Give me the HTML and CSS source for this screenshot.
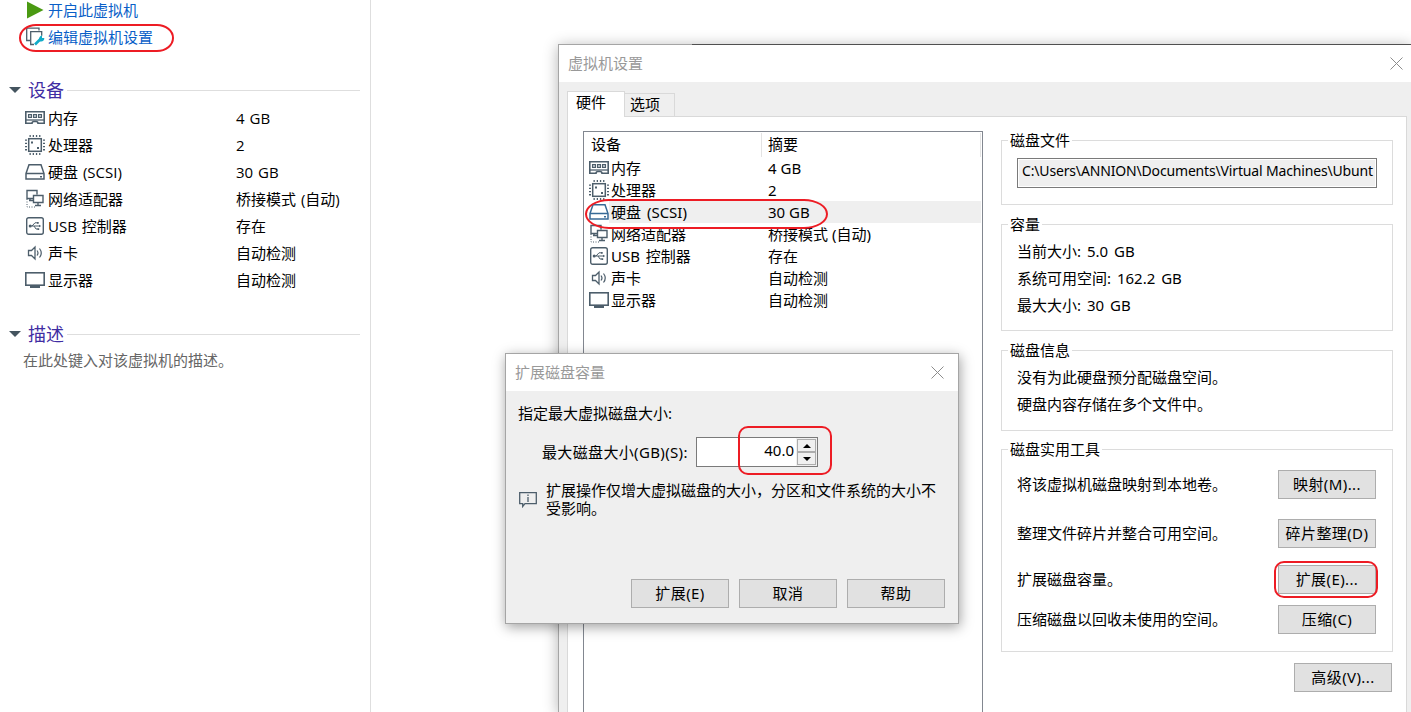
FILE: index.html
```html
<!DOCTYPE html>
<html lang="zh-CN">
<head>
    <meta charset="UTF-8">
    <meta name="viewport" content="width=device-width, initial-scale=1.0">
    <title>虚拟机设置</title>
    <link rel="stylesheet" href="styles.css">
</head>
<body>
    <!-- Icon sprite -->
    <svg class="sprite">
        <symbol id="i-memory" viewBox="0 0 20 20">
            <path d="M.8 3.800h18.400v11.400h-6.200q0-1.700-2-1.700h-2q-2 0-2 1.700H.8z" fill="none" stroke="currentColor" stroke-width="1.600"/>
            <path d="M3.600 6.600h2.800v2.800H3.600zM8.600 6.600h2.800v2.800H8.600zM13.600 6.600h2.800v2.800h-2.800z" fill="none" stroke="currentColor" stroke-width="1.300"/>
            <path d="M1 12h18" stroke="currentColor" stroke-width="1.300"/>
        </symbol>
        <symbol id="i-cpu" viewBox="0 0 20 20">
            <rect x="3.700" y="3.700" width="12.600" height="12.600" fill="none" stroke="currentColor" stroke-width="1.500"/>
            <path d="M4.500 1h11M4.500 19h11M1 4.500v11M19 4.500v11" fill="none" stroke="currentColor" stroke-width="2" stroke-dasharray="1.300 1.900"/>
            <path d="M6 6.500h2v2H6zM12 12h2v2h-2z" fill="currentColor"/>
        </symbol>
        <symbol id="i-disk" viewBox="0 0 20 20">
            <path d="M1 11.500L4 2.700h12l3 8.800v5.500H1zM1 11.500h18" fill="none" stroke="currentColor" stroke-width="1.500"/>
            <path d="M15 14h2v1.500h-2z" fill="currentColor"/>
        </symbol>
        <symbol id="i-net" viewBox="0 0 20 20">
            <path d="M8 9.500H2v-8h10v4M8.500 6.500h9.500v7H8.500zM13 13.500v2.500M10 16.500h6M5 9.500v2M4 11.500h4" fill="none" stroke="currentColor" stroke-width="1.400"/>
            <path d="M2 10v8h9" fill="none" stroke="currentColor" stroke-width="1" stroke-dasharray="1 1.500"/>
        </symbol>
        <symbol id="i-usb" viewBox="0 0 20 20">
            <rect x="1.700" y="1.700" width="16.600" height="16.600" rx="2" fill="none" stroke="currentColor" stroke-width="1.400"/>
            <path d="M5 10h9.500M7 10l3-3.200h2.500M9 10l2 3h2" fill="none" stroke="currentColor" stroke-width="1"/>
            <circle cx="5.200" cy="10" r="1.500" fill="currentColor"/>
            <path d="M12 6h1.700v1.700H12zM12.500 12.200h1.700v1.700h-1.700zM14 8.700l2.200 1.300-2.200 1.300z" fill="currentColor"/>
        </symbol>
        <symbol id="i-sound" viewBox="0 0 20 20">
            <path d="M3.500 7.500h3L10 4v12l-3.500-3.500h-3z" fill="none" stroke="currentColor" stroke-width="1.300"/>
            <path d="M12 7.500q2 2.500 0 5M14.500 5.500q3.500 4.500 0 9" fill="none" stroke="currentColor" stroke-width="1.200"/>
        </symbol>
        <symbol id="i-display" viewBox="0 0 20 20">
            <rect x=".8" y="2.800" width="18.400" height="12.400" fill="none" stroke="currentColor" stroke-width="1.600"/>
            <path d="M5 17h10" stroke="currentColor" stroke-width="2"/>
        </symbol>
        <symbol id="i-close" viewBox="0 0 13 13">
            <path d="M.5 .5l12 12M12.500 .5l-12 12" fill="none" stroke="currentColor" stroke-width="1"/>
        </symbol>
    </svg>

    <!-- VM summary -->
    <aside class="summary">
        <a class="action">
            <svg class="action-icon" viewBox="0 0 20 20"><path d="M2 1.500L18.500 10 2 18.500z" fill="#4a9a12"/></svg>
            <span>开启此虚拟机</span>
        </a>
        <a class="action">
            <svg class="action-icon" viewBox="0 0 20 20">
                <path d="M5 13.500H1.700V1.200H14v2.300" fill="none" stroke="#4d5e6b" stroke-width="1.300"/>
                <path d="M9 17.500H5.700V4.700h11v4" fill="none" stroke="#4d5e6b" stroke-width="1.300"/>
                <path d="M10 17.500l5-5" stroke="#12abc8" stroke-width="2.600"/>
                <path d="M17 8.500v2.500h2.300c.2 2.800-2 4.200-4.800 3.300-1.200-2.500-.2-5.300 2.500-5.800z" fill="#12abc8"/>
            </svg>
            <span>编辑虚拟机设置</span>
            <i class="mark mark-edit"></i>
        </a>

        <h2 class="group-title devices-title">设备</h2>
        <ul class="devices">
            <li><svg><use href="#i-memory"/></svg><span>内存</span><b>4 GB</b></li>
            <li><svg><use href="#i-cpu"/></svg><span>处理器</span><b>2</b></li>
            <li><svg><use href="#i-disk"/></svg><span>硬盘 (SCSI)</span><b>30 GB</b></li>
            <li><svg><use href="#i-net"/></svg><span>网络适配器</span><b>桥接模式 (自动)</b></li>
            <li><svg><use href="#i-usb"/></svg><span>USB 控制器</span><b>存在</b></li>
            <li><svg><use href="#i-sound"/></svg><span>声卡</span><b>自动检测</b></li>
            <li><svg><use href="#i-display"/></svg><span>显示器</span><b>自动检测</b></li>
        </ul>

        <h2 class="group-title">描述</h2>
        <p class="description">在此处键入对该虚拟机的描述。</p>
    </aside>

    <!-- Settings window -->
    <section class="window settings">
        <header class="titlebar">
            <span>虚拟机设置</span>
            <svg class="close"><use href="#i-close"/></svg>
        </header>
        <div class="settings-body">
            <nav class="tabs">
                <span class="tab active">硬件</span>
                <span class="tab">选项</span>
            </nav>
            <div class="panel">
                <div class="hardware">
                    <div class="hardware-head"><span>设备</span><b>摘要</b></div>
                    <ul class="hardware-list">
                        <li><svg><use href="#i-memory"/></svg><span>内存</span><b>4 GB</b></li>
                        <li><svg><use href="#i-cpu"/></svg><span>处理器</span><b>2</b></li>
                        <li class="selected"><svg><use href="#i-disk"/></svg><span>硬盘 (SCSI)</span><b>30 GB</b><i class="mark mark-row"></i></li>
                        <li><svg><use href="#i-net"/></svg><span>网络适配器</span><b>桥接模式 (自动)</b></li>
                        <li><svg><use href="#i-usb"/></svg><span>USB 控制器</span><b>存在</b></li>
                        <li><svg><use href="#i-sound"/></svg><span>声卡</span><b>自动检测</b></li>
                        <li><svg><use href="#i-display"/></svg><span>显示器</span><b>自动检测</b></li>
                    </ul>
                </div>

                <div class="details">
                    <fieldset class="file">
                        <legend>磁盘文件</legend>
                        <div class="path">C:\Users\ANNION\Documents\Virtual Machines\Ubunt</div>
                    </fieldset>
                    <fieldset class="capacity">
                        <legend>容量</legend>
                        <p>当前大小: 5.0 GB</p>
                        <p>系统可用空间: 162.2 GB</p>
                        <p>最大大小: 30 GB</p>
                    </fieldset>
                    <fieldset class="info">
                        <legend>磁盘信息</legend>
                        <p>没有为此硬盘预分配磁盘空间。</p>
                        <p>硬盘内容存储在多个文件中。</p>
                    </fieldset>
                    <fieldset class="tools">
                        <legend>磁盘实用工具</legend>
                        <div class="tool-grid">
                            <span>将该虚拟机磁盘映射到本地卷。</span><button>映射(M)...</button>
                            <span>整理文件碎片并整合可用空间。</span><button>碎片整理(D)</button>
                            <span>扩展磁盘容量。</span><button>扩展(E)...<i class="mark mark-expand"></i></button>
                            <span>压缩磁盘以回收未使用的空间。</span><button>压缩(C)</button>
                        </div>
                    </fieldset>
                    <button class="advanced">高级(V)...</button>
                </div>
            </div>
        </div>
    </section>

    <!-- Expand disk window -->
    <section class="window expand">
        <header class="titlebar">
            <span>扩展磁盘容量</span>
            <svg class="close"><use href="#i-close"/></svg>
        </header>
        <div class="expand-body">
            <p class="prompt">指定最大虚拟磁盘大小:</p>
            <div class="size-row">
                <label>最大磁盘大小(GB)(S):</label>
                <div class="spinner">
                    <span class="value">40.0</span>
                    <div class="arrows">
                        <span><svg viewBox="0 0 8 4"><path d="M0 4l4-4 4 4z"/></svg></span>
                        <span><svg viewBox="0 0 8 4"><path d="M0 0l4 4 4-4z"/></svg></span>
                    </div>
                    <i class="mark mark-size"></i>
                </div>
            </div>
            <div class="note">
                <svg viewBox="0 0 18 17">
                    <path d="M.7 1.700h16.600v11H6L3.700 15.500v-2.800h-3z" fill="none" stroke="#4d5e6b" stroke-width="1.300"/>
                    <path d="M9 3.500v1.500M9 6v5" stroke="#4d5e6b" stroke-width="1.300"/>
                </svg>
                <p>扩展操作仅增大虚拟磁盘的大小，分区和文件系统的大小不受影响。</p>
            </div>
            <div class="buttons">
                <button>扩展(E)</button>
                <button>取消</button>
                <button>帮助</button>
            </div>
        </div>
    </section>
</body>
</html>
```
FILE: styles.css
```css
* {
    box-sizing: border-box;
}
body {
    margin: 0;
    height: 712px;
    position: relative;
    overflow: hidden;
    background: #fff;
    color: #000;
    font-family: 'Noto Sans', 'Noto Sans CJK SC', sans-serif;
    font-size: 15px;
    line-height: 20px;
    white-space: nowrap;
}
p, h2, ul {
    margin: 0;
    padding: 0;
}
ul {
    list-style: none;
}
b {
    font-weight: normal;
}
.sprite {
    display: none;
}

/* hand-drawn red highlights */
.mark {
    position: absolute;
    border: 2px solid #ed1c24;
    pointer-events: none;
}
.mark-edit {
    left: 19px;
    top: -3px;
    width: 155px;
    height: 28px;
    border-radius: 17px / 14px;
}
.mark-row {
    left: 1px;
    top: -2px;
    width: 243px;
    height: 30px;
    border-radius: 24px / 15px;
    z-index: 1;
}
.mark-expand {
    left: -5px;
    top: -5px;
    width: 104px;
    height: 37px;
    border-radius: 10px;
}
.mark-size {
    left: 41px;
    top: -12px;
    width: 94px;
    height: 49px;
    border-radius: 10px;
}

/* summary */
.summary {
    width: 371px;
    height: 100%;
    border-right: 1px solid #dedede;
    font-family: 'Open Sans', 'Noto Sans CJK SC', sans-serif;
}
.action {
    display: flex;
    position: relative;
    height: 20px;
    margin-bottom: 7px;
    padding-left: 25px;
    color: #0a5fc8;
}
.action-icon {
    width: 20px;
    height: 20px;
    margin-right: 3px;
}
.group-title {
    display: flex;
    align-items: center;
    height: 24px;
    padding: 0 10px 0 9px;
    color: #3f2da3;
    font-size: 18px;
    font-weight: normal;
    line-height: 24px;
}
.group-title::before {
    content: "";
    border: 6px solid transparent;
    border-top-color: #44545f;
    border-bottom: 0;
    margin-right: 7px;
}
.group-title::after {
    content: "";
    flex: 1;
    height: 1px;
    margin-left: 3px;
    background: #dedede;
}
.devices-title {
    margin-top: 31px;
}
.devices {
    margin: 2px 0 29px;
    word-spacing: 1px;
}
.devices li {
    display: grid;
    grid-template-columns: 23px 188px 1fr;
    align-items: center;
    height: 27px;
    padding-left: 25px;
}
.devices svg, .hardware-list svg {
    width: 20px;
    height: 20px;
    color: #4d5e6b;
}
.description {
    padding: 4px 0 0 23px;
    color: #666;
}

/* windows */
.window {
    position: absolute;
    background: #efefef;
    border: 1px solid #a5a5a5;
}
.titlebar {
    display: flex;
    justify-content: space-between;
    align-items: center;
    height: 37px;
    background: #fff;
    color: #999;
    font-family: 'Open Sans', 'Noto Sans CJK SC', sans-serif;
}
.titlebar span {
    padding-bottom: 2px;
}
.close {
    width: 13px;
    height: 13px;
    color: #8c8c8c;
}
button {
    position: relative;
    width: 98px;
    height: 29px;
    padding: 0;
    background: #e1e1e1;
    border: 1px solid #adadad;
    color: #000;
    font: inherit;
    letter-spacing: 0.4px;
    line-height: 27px;
}

/* settings window */
.settings {
    left: 558px;
    top: 44px;
    width: 853px;
    height: 668px;
    border-width: 1px 0 0 1px;
    box-shadow: 0 2px 14px rgba(0, 0, 0, 0.3);
}
.settings::before {
    content: "";
    position: absolute;
    left: 133px;
    top: -1px;
    right: 0;
    height: 1px;
    background: #505050;
}
.settings .titlebar {
    padding: 0 8px 0 9px;
}
.settings-body {
    padding: 9px 0 0 8px;
}
.tabs {
    display: flex;
    align-items: flex-end;
    height: 25px;
}
.tab {
    width: 50px;
    height: 23px;
    padding-left: 5px;
    border: 1px solid #d9d9d9;
    border-width: 1px 1px 0 0;
    line-height: 21px;
}
.tab.active {
    width: 58px;
    height: 26px;
    margin-bottom: -1px;
    padding-left: 8px;
    border-width: 1px 1px 0 1px;
    background: #fff;
    z-index: 1;
}
.panel {
    display: flex;
    gap: 18px;
    width: 840px;
    height: 596px;
    padding: 14px 0 0 15px;
    background: #fff;
    border: 1px solid #d9d9d9;
    border-bottom: 0;
}
.hardware {
    width: 400px;
    border: 1px solid #828790;
    border-bottom: 0;
}
.hardware-head {
    display: grid;
    grid-template-columns: 178px 1fr;
    height: 24px;
    margin: 1px 1px 0 0;
    border-right: 1px solid #e3e3e3;
    line-height: 23px;
}
.hardware-head span {
    padding-left: 7px;
    border-right: 1px solid #e3e3e3;
}
.hardware-head b {
    padding-left: 6px;
}
.hardware-list li {
    display: grid;
    grid-template-columns: 22px 157px 1fr;
    align-items: center;
    position: relative;
    height: 22px;
    margin-right: 1px;
    padding-left: 5px;
}
.hardware-list span {
    word-spacing: 2px;
}
.hardware-list .selected {
    background: linear-gradient(#efefef, #efefef) 25px 0 no-repeat;
}
.hardware-list .selected svg {
    color: #376a96;
}
.details {
    width: 392px;
    margin-top: -1px;
}
fieldset {
    height: 75px;
    margin: 0 0 9px;
    padding: 0 15px;
    border: 1px solid #dcdcdc;
}
legend {
    height: 20px;
    margin-left: -9px;
    padding: 0 2px;
}
.path {
    width: 360px;
    height: 30px;
    margin-top: 8px;
    padding: 0 2px 0 4px;
    background: #efefef;
    border: 1px solid #7a7a7a;
    box-shadow: inset 0 0 0 1px #fff;
    font-size: 14px;
    letter-spacing: -0.16px;
    line-height: 24px;
}
.capacity {
    height: 117px;
    word-spacing: 2px;
}
.info {
    height: 91px;
    margin-bottom: 8px;
}
.capacity p, .info p {
    line-height: 27px;
}
.capacity p:nth-of-type(1), .info p:nth-of-type(1) {
    margin-top: 4px;
}
.tools {
    height: 213px;
    margin-bottom: 11px;
}
.tool-grid {
    display: grid;
    grid-template-columns: 1fr 98px;
    grid-template-rows: 49px 46px 40px 29px;
    width: 359px;
    margin-top: 11px;
    line-height: 29px;
}
.advanced {
    display: block;
    margin-left: 293px;
}

/* expand window */
.expand {
    left: 505px;
    top: 353px;
    width: 454px;
    height: 271px;
    box-shadow: 1px 3px 12px rgba(0, 0, 0, 0.38);
}
.expand .titlebar {
    padding: 0 14px 0 9px;
}
.expand-body {
    padding: 12px 13px 0 12px;
}
.size-row {
    display: flex;
    align-items: center;
    height: 30px;
    margin-top: 14px;
    padding-left: 24px;
}
.size-row label {
    width: 154px;
    letter-spacing: 0.35px;
}
.spinner {
    display: flex;
    justify-content: flex-end;
    position: relative;
    width: 122px;
    height: 30px;
    background: #fff;
    border: 1px solid #7a7a7a;
}
.value {
    margin-right: 2px;
    line-height: 24px;
}
.arrows {
    width: 21px;
    padding: 1px;
    background: #f0f0f0;
}
.arrows span {
    display: flex;
    justify-content: center;
    align-items: center;
    height: 13px;
    border: 1px solid #adadad;
}
.arrows svg {
    width: 8px;
    height: 4px;
}
.note {
    display: flex;
    margin-top: 14px;
}
.note svg {
    width: 18px;
    height: 17px;
    margin: 10px 9px 0 1px;
}
.note p {
    width: 392px;
    line-height: 18px;
    white-space: normal;
}
.buttons {
    display: flex;
    justify-content: flex-end;
    gap: 10px;
    margin-top: 62px;
}
```
